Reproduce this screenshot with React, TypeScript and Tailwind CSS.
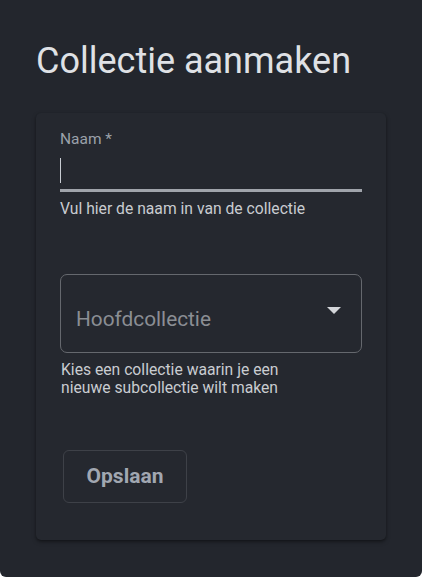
import React from 'react'

export default function App() {
  return (
    <div className="w-[422px] h-[577px] bg-[#23262d] rounded-b-[6px] overflow-hidden font-['Roboto',sans-serif]">
      <h1 className="pl-[36px] pt-[40px] text-[36px] leading-[42px] text-[#dfe1e5] font-normal">
        Collectie aanmaken
      </h1>

      <div className="mx-[36px] mt-[31px] h-[427px] w-[350px] rounded-[5px] bg-[#25282f] shadow-[0_2px_4px_rgba(0,0,0,0.35),0_1px_2px_rgba(0,0,0,0.2)] px-[24px] pt-[16px]">
        {/* Naam field */}
        <div>
          <label className="block text-[15.5px] leading-[20px] text-[#9ba1aa]">Naam *</label>
          <div className="relative mt-[5px] h-[38px] border-b-[3px] border-[#a0a4ab]">
            <span className="absolute left-0 top-[4px] h-[25px] w-px bg-[#c8ccd2]" />
          </div>
          <p className="mt-[7px] text-[15.7px] leading-[19px] text-[#c9ccd1]">Vul hier de naam in van de collectie</p>
        </div>

        {/* Hoofdcollectie select */}
        <div className="mt-[56px]">
          <div className="flex h-[79px] items-center justify-between rounded-[7px] border border-[#65686e] pl-[15px] pr-[20px]">
            <span className="mt-[13px] text-[20.8px] text-[#8b8e94]">Hoofdcollectie</span>
            <svg width="14" height="8" viewBox="0 0 14 8" className="mb-[5px]">
              <path d="M0 0 L14 0 L7 7 Z" fill="#d4d6da" />
            </svg>
          </div>
          <p className="mt-[8px] pl-px text-[15.7px] leading-[18px] text-[#c9ccd1]">
            Kies een collectie waarin je een
            <br />
            nieuwe subcollectie wilt maken
          </p>
        </div>

        <button className="ml-[3px] mt-[53px] h-[53px] w-[124px] rounded-[6px] border border-[#3e4148] text-[21px] font-bold text-[#a1a7b1]">
          Opslaan
        </button>
      </div>
    </div>
  )
}
